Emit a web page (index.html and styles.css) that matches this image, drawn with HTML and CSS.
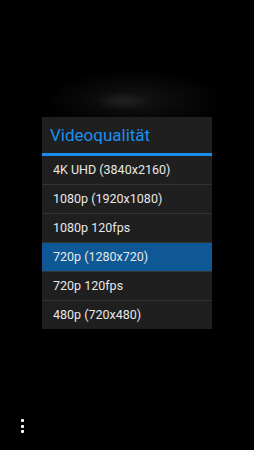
FILE: index.html
```html
<!DOCTYPE html>
<html lang="de">
<head>
    <meta charset="UTF-8">
    <meta name="viewport" content="width=device-width, initial-scale=1.0">
    <title>Videoqualität</title>
    <link rel="stylesheet" href="styles.css">
</head>
<body>
    <div class="screen">
        <!-- Auswahl-Dialog -->
        <div class="dialog">
            <div class="dialog-title">Videoqualität</div>
            <ul class="options">
                <li class="option">4K UHD (3840x2160)</li>
                <li class="option">1080p (1920x1080)</li>
                <li class="option">1080p 120fps</li>
                <li class="option selected">720p (1280x720)</li>
                <li class="option">720p 120fps</li>
                <li class="option">480p (720x480)</li>
            </ul>
        </div>

        <!-- Menü-Knopf unten links -->
        <div class="menu-button">
            <span class="dot"></span>
            <span class="dot"></span>
            <span class="dot"></span>
        </div>
    </div>
</body>
</html>
```

FILE: styles.css
```css
body {
    margin: 0;
    background-color: #000;
    font-family: Roboto, "Noto Sans", sans-serif;
}

.screen {
    display: flex;
    flex-direction: column;
    height: 100vh;
    background:
        radial-gradient(ellipse 28px 9px at 122px 101px, rgba(45, 45, 45, 0.6), transparent),
        radial-gradient(ellipse 90px 30px at 135px 100px, rgba(28, 28, 28, 0.7), transparent),
        #000;
}

.dialog {
    width: 170px;
    margin: 117px auto 0;
    background-color: #1f1f1f;
}

.dialog-title {
    height: 36px;
    line-height: 36px;
    padding-left: 8px;
    font-size: 17px;
    color: #1b8fec;
    border-bottom: 3px solid #1b8cea;
}

.options {
    list-style: none;
    margin: 0;
    padding: 0;
}

.option {
    height: 28px;
    line-height: 28px;
    padding-left: 11px;
    font-size: 12.5px;
    color: #e8e8e8;
    border-bottom: 1px solid #333;
}

.option:last-child {
    border-bottom: none;
}

.option.selected {
    background-color: #0e5896;
}

.menu-button {
    margin-top: auto;
    margin-bottom: 17px;
    margin-left: 21px;
    display: flex;
    flex-direction: column;
    gap: 2.5px;
}

.dot {
    width: 3px;
    height: 3px;
    border-radius: 1px;
    background-color: #fff;
}
```
